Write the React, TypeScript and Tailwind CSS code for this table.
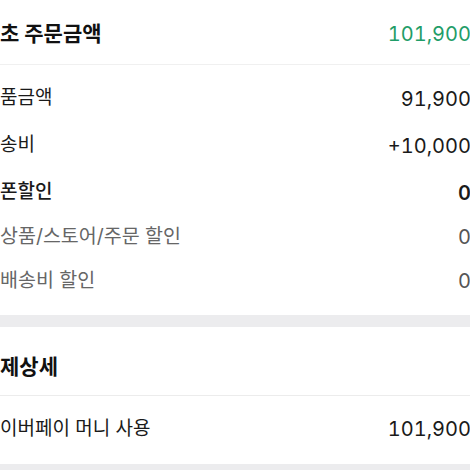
const font = { fontFamily: 'Inter, "Noto Sans CJK KR", "Noto Sans", sans-serif' }

interface RowProps {
  label: string
  value: string
  sub?: boolean
  strong?: boolean
}

function Row({ label, value, sub = false, strong = false }: RowProps) {
  return (
    <div className={sub ? 'flex h-[44px] items-center justify-between pt-[2px]' : 'flex h-[47px] items-center justify-between pt-[4px]'}>
      <span
        className={
          sub
            ? 'text-[19.5px] text-[#666]'
            : strong
              ? 'text-[19px] font-medium text-[#1a1a1a]'
              : 'text-[19px] text-[#1a1a1a]'
        }
      >
        {label}
      </span>
      <span
        className={
          sub
            ? 'mr-[-1px] text-[20px] tabular-nums text-[#555]'
            : strong
              ? 'mr-[-1px] text-[20px] font-semibold tabular-nums text-[#1a1a1a]'
              : 'mr-[-1px] text-[20px] tabular-nums text-[#1a1a1a]'
        }
      >
        {value}
      </span>
    </div>
  )
}

export default function App() {
  return (
    <div className="h-[470px] w-[470px] overflow-hidden bg-white" style={font}>
      {/* 주문금액 */}
      <section>
        <div className="flex h-[65px] items-center justify-between pt-[4px] border-b border-[#f0f0f0]">
          <span className="text-[21px] font-bold text-[#111]">초 주문금액</span>
          <span className="mr-[-1px] text-[20px] tabular-nums text-[#1f9d68]">101,900</span>
        </div>
        <div className="pt-[8px] pb-[13px]">
          <Row label="품금액" value="91,900" />
          <Row label="송비" value="+10,000" />
          <Row label="폰할인" value="0" strong />
          <Row label="상품/스토어/주문 할인" value="0" sub />
          <Row label="배송비 할인" value="0" sub />
        </div>
      </section>

      <div className="h-[12px] bg-[#ececee]" />

      {/* 결제상세 */}
      <section>
        <div className="flex h-[69px] items-center pt-[12px] border-b border-[#ececec]">
          <span className="text-[21px] font-bold text-[#111]">제상세</span>
        </div>
        <div className="flex h-[60px] items-center justify-between pt-[6px]">
          <span className="text-[19px] text-[#1a1a1a]">이버페이 머니 사용</span>
          <span className="mr-[-1px] text-[20px] tabular-nums text-[#1a1a1a]">101,900</span>
        </div>
        <div className="h-[8px]" />
      </section>

      <div className="h-[12px] bg-[#ececee]" />
    </div>
  )
}
